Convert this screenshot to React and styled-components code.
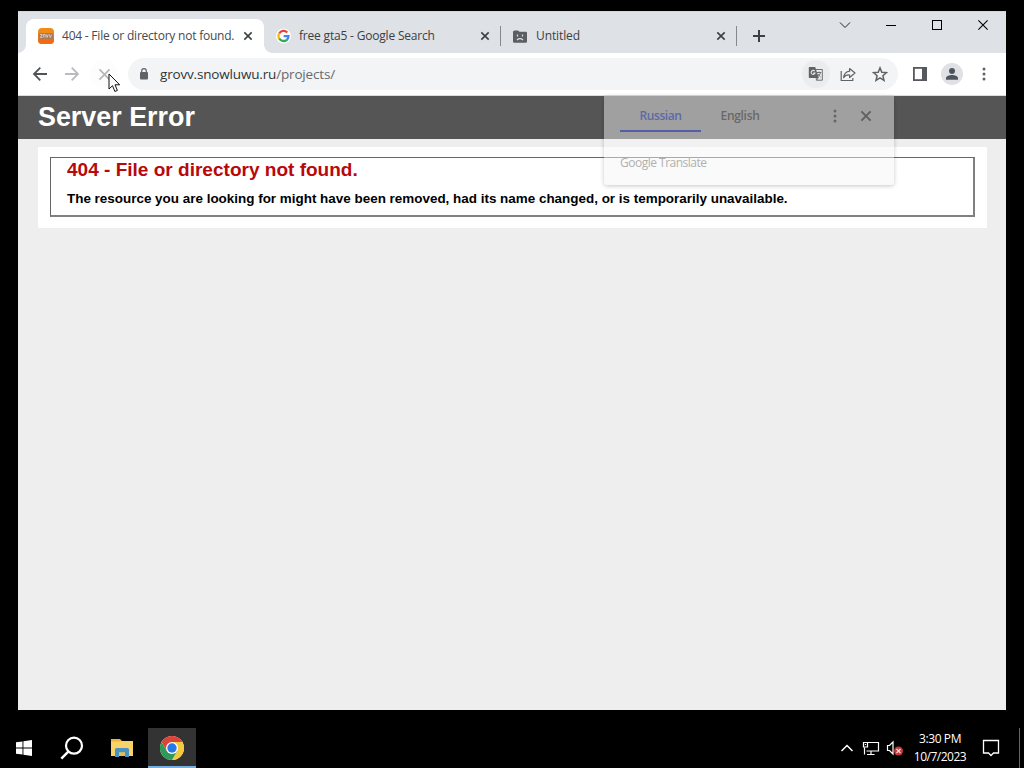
import React from "react";
import styled, { createGlobalStyle } from "styled-components";

const Global = createGlobalStyle`
  * { box-sizing: border-box; }
  body { margin: 0; background: #000; overflow: hidden; }
  svg { display: block; flex: none; }
`;

const ui = `"Open Sans", "Noto Sans", sans-serif`;

const Desktop = styled.div`
  position: relative;
  width: 1024px;
  height: 768px;
  background: #000;
  display: flex;
  flex-direction: column;
  justify-content: space-between;
  padding-top: 11px;
  font-family: ${ui};
`;

const BrowserWindow = styled.section`
  position: relative;
  width: 988px;
  height: 699px;
  margin-left: 18px;
  background: #eee;
  display: flex;
  flex-direction: column;
`;

const TabStrip = styled.div`
  height: 42px;
  flex: none;
  display: flex;
  align-items: flex-end;
  padding-left: 8px;
  background: #dee1e6;
  border-top: 1px solid #d3d5da;
`;

const Tab = styled.div`
  position: relative;
  width: ${(p) => p.$w}px;
  height: 34px;
  display: flex;
  align-items: center;
  padding: 0 ${(p) => (p.$active ? 9 : 8)}px 0 12px;
  border-radius: 8px 8px 0 0;
  background: ${(p) => (p.$active ? "#fff" : "transparent")};
  color: ${(p) => (p.$active ? "#45494d" : "#3c4043")};
  &::before, &::after {
    content: "";
    display: ${(p) => (p.$active ? "block" : "none")};
    position: absolute;
    bottom: 0;
    width: 8px;
    height: 8px;
  }
  &::before { left: -8px; background: radial-gradient(circle at 0 0, transparent 7.5px, #fff 8px); }
  &::after { right: -8px; background: radial-gradient(circle at 100% 0, transparent 7.5px, #fff 8px); }
`;

const TabTitle = styled.span`
  flex: 1;
  margin-left: ${(p) => p.$gap || 8}px;
  font-size: 12px;
  line-height: 16px;
  letter-spacing: ${(p) => p.$ls || 0}px;
  white-space: nowrap;
`;

const Separator = styled.i`
  width: 1px;
  height: 20px;
  margin-bottom: 7px;
  background: #85888d;
`;

const NewTab = styled.div`
  width: 44px;
  height: 34px;
  display: grid;
  place-items: center;
`;

const Controls = styled.div`
  align-self: flex-start;
  margin-left: auto;
  display: flex;
`;

const ControlButton = styled.div`
  width: 46px;
  height: 26px;
  display: grid;
  place-items: center;
`;

const Toolbar = styled.div`
  height: 43px;
  flex: none;
  display: flex;
  align-items: center;
  padding: 0 6px;
  background: #fff;
  border-bottom: 1px solid #dcdddf;
`;

const ToolButton = styled.div`
  width: 32px;
  height: 32px;
  display: grid;
  place-items: center;
`;

const Disc = styled.div`
  width: ${(p) => p.$size || 28}px;
  height: ${(p) => p.$size || 28}px;
  border-radius: 50%;
  background: ${(p) => p.$bg};
  display: grid;
  place-items: center;
`;

const Omnibox = styled.div`
  width: 770px;
  height: 32px;
  margin: 0 6px 0 8px;
  padding: 0 2px 0 11px;
  border-radius: 16px;
  background: #f3f4f5;
  display: flex;
  align-items: center;
`;

const Url = styled.span`
  flex: 1;
  margin-left: 11px;
  font-size: 13.5px;
  line-height: 20px;
  letter-spacing: -0.17px;
  color: #303438;
  span { color: #666a6e; }
`;

const PageHeader = styled.header`
  height: 43px;
  flex: none;
  padding: 6px 20px;
  background: #555;
  h1 {
    margin: 0;
    font: bold 26.88px/31px "Liberation Sans", sans-serif;
    color: #fff;
  }
`;

const Card = styled.main`
  margin: 8px 19px 0 20px;
  height: 81px;
  background: #fff;
  padding: 10px 12px 11px 12px;
  font-family: "Liberation Sans", sans-serif;
`;

const Fieldset = styled.div`
  height: 60px;
  border: 1px solid #666;
  border-right-width: 2px;
  border-bottom-width: 2px;
  border-right-color: #808080;
  border-bottom-color: #808080;
  padding: 0 16px;
  h2 {
    margin: 0;
    font-size: 19.04px;
    line-height: 23px;
    color: #b8080c;
  }
  h3 {
    margin: 10px 0 0;
    font-size: 13.44px;
    line-height: 16px;
    color: #000;
    white-space: nowrap;
  }
`;

const TranslateBubble = styled.aside`
  position: absolute;
  left: 586px;
  top: 85px;
  width: 290px;
  height: 89px;
  padding: 0 16px;
  background: rgba(244, 244, 244, 0.47);
  border-radius: 0 0 3px 3px;
  box-shadow: 0 1px 4px rgba(0, 0, 0, 0.22);
`;

const BubbleRow = styled.div`
  display: flex;
  align-items: center;
  height: 36px;
  padding-top: 4px;
`;

const Language = styled.div`
  width: ${(p) => p.$w}px;
  height: 32px;
  padding-top: 7px;
  text-align: center;
  font-size: 12px;
  font-weight: 600;
  line-height: 17px;
  letter-spacing: ${(p) => p.$ls}px;
  color: ${(p) => (p.$active ? "#5b69a8" : "#686868")};
  border-bottom: 2px solid ${(p) => (p.$active ? "#5360a8" : "transparent")};
`;

const BubbleIcons = styled.div`
  margin-left: auto;
  padding-right: 7px;
  display: flex;
  align-items: center;
  gap: 24px;
`;

const BubbleBrand = styled.div`
  margin-top: 22px;
  font-size: 12px;
  line-height: 18px;
  letter-spacing: -0.5px;
  color: #b0b0b0;
`;

const Pointer = styled.svg`
  position: absolute;
  left: 108px;
  top: 73px;
`;

const Taskbar = styled.footer`
  height: 40px;
  display: flex;
  align-items: center;
  background: #000;
`;

const TaskButton = styled.div`
  width: ${(p) => p.$w || 48}px;
  height: 40px;
  display: grid;
  place-items: center;
  background: ${(p) => (p.$active ? "#333" : "transparent")};
  box-shadow: ${(p) => (p.$active ? "inset 0 -2px #76aee0" : "none")};
`;

const Tray = styled.div`
  margin-left: auto;
  display: flex;
  align-items: center;
  height: 40px;
`;

const Clock = styled.div`
  width: 72px;
  text-align: center;
  font-size: 12px;
  line-height: 18px;
  letter-spacing: -0.4px;
  color: #fff;
  div + div { letter-spacing: -0.5px; }
`;

const DesktopEdge = styled.i`
  width: 1px;
  height: 40px;
  margin: 0 4px 0 13px;
  background: #666;
`;

const Cross = ({ size = 8, color = "#3c4043", w = 1.6 }) => (
  <svg width={size} height={size} viewBox="0 0 10 10" stroke={color} strokeWidth={(w * 10) / size} overflow="visible">
    <path d="M0.4 0.4L9.6 9.6M9.6 0.4L0.4 9.6" />
  </svg>
);

const CloseSlot = styled.div`
  width: 15px;
  height: 16px;
  display: grid;
  place-items: center;
`;

const SiteIcon = () => (
  <svg width="16" height="16" viewBox="0 0 16 16">
    <rect width="16" height="16" rx="4" fill="#f28a18" />
    <path d="M0 10h16v2a4 4 0 0 1-4 4H4a4 4 0 0 1-4-4z" fill="#ef6c14" />
    <rect x="0.5" y="5" width="15" height="6" rx="2" fill="#a9795c" />
    <path d="M2 6.5h2.2L2.3 9.5h2M5.3 9.5v-3h1.8v3M8.2 6.5l1 3 1-3M11.3 6.5l1 3 1.2-3" stroke="#d8c8bc" fill="none" />
  </svg>
);

const GoogleIcon = () => (
  <svg width="15" height="16" viewBox="0 0 15 16">
    <circle cx="7.5" cy="8" r="7.5" fill="#fff" />
    <g fill="none" strokeWidth="2.3">
      <path d="M11.2 4.5A5 5 0 0 0 3.2 5.5" stroke="#ea4335" />
      <path d="M3.2 5.4A5 5 0 0 0 3.2 10.6" stroke="#fbbc05" />
      <path d="M3.2 10.5A5 5 0 0 0 10.8 11.8" stroke="#34a853" />
      <path d="M10.6 12A5 5 0 0 0 12.5 8.2H7.6" stroke="#4285f4" />
    </g>
  </svg>
);

const SadFolder = () => (
  <svg width="14" height="13" viewBox="0 0 14 13">
    <path d="M1.5 0.5H5l1.5 1.2h6A1.3 1.3 0 0 1 14 3v8.5a1.3 1.3 0 0 1-1.4 1.3H1.4A1.3 1.3 0 0 1 0 11.5V2A1.5 1.5 0 0 1 1.5.5z" fill="#5b5f64" />
    <path d="M4.500 4.500v2M9.500 4.500v2M4 10q3-2.600 6 0" stroke="#dee1e6" strokeWidth="1.200" fill="none" />
  </svg>
);

const Arrow = ({ color, flip }) => (
  <svg width="16" height="16" viewBox="0 0 16 16" fill="none" stroke={color} strokeWidth="1.8" transform={flip ? "scale(-1 1)" : undefined}>
    <path d="M15 8H2M8.300 1.700L2 8l6.300 6.300" />
  </svg>
);

const Lock = () => (
  <svg width="10" height="12" viewBox="0 0 10 12">
    <rect x="1" y="4" width="8" height="7.500" rx="1" fill="#5f6368" />
    <path d="M2.700 4.500V3a2.300 2.300 0 0 1 4.600 0v1.500" fill="none" stroke="#5f6368" strokeWidth="1.200" />
  </svg>
);

const TranslateIcon = () => (
  <svg width="16" height="16" viewBox="0 0 16 16">
    <path d="M6 3.500h8.300v10.700H8.500" fill="#eceded" stroke="#6d7074" />
    <path d="M1.500 1h5.700l3.600 11H1.500A.8.800 0 0 1 .8 11.200V1.800A.8.800 0 0 1 1.500 1z" fill="#5f6368" />
    <path d="M6.700 5.200A2 2 0 1 0 7 7.100H5.200" stroke="#e6e7e8" fill="none" strokeWidth="1.100" />
    <path d="M9 6.500h4.300M11 5.500v1M12.500 6.500q-.8 2.800-2.400 4M10 8q1.200 2 2.700 3M8.200 12l.3 2.200 1.700-2.200" stroke="#6d7074" fill="none" strokeWidth="1" />
  </svg>
);

const ShareIcon = () => (
  <svg width="16" height="15" viewBox="0 0 16 15" fill="none" stroke="#5f6368" strokeWidth="1.200">
    <path d="M1.200 4v9.500h11.600V11" />
    <path d="M9.600 1.500L15 6 9.600 10.500V8Q5.600 7.600 3.600 10.700 4.300 4.900 9.600 4.200z" strokeLinejoin="round" />
  </svg>
);

const Star = () => (
  <svg width="16" height="16" viewBox="0 0 16 16" fill="none" stroke="#5f6368" strokeWidth="1.500">
    <path d="M8 1.900l1.800 4.300 4.700.4-3.600 3.100 1.100 4.600L8 11.800l-4 2.500 1.100-4.600L1.500 6.600l4.700-.4z" />
  </svg>
);

const SidePanel = () => (
  <svg width="14" height="14" viewBox="0 0 14 14">
    <rect x="0.900" y="0.900" width="12.200" height="12.200" fill="none" stroke="#55595e" strokeWidth="1.800" />
    <rect x="9" y="1" width="4" height="12" fill="#55595e" />
  </svg>
);

const Person = () => (
  <svg width="14" height="14" viewBox="0 0 14 14" fill="#50555d">
    <circle cx="7" cy="4" r="3" />
    <path d="M1 12.800v-1.600c0-2.200 3.500-3.200 6-3.200s6 1 6 3.200v1.600z" />
  </svg>
);

const Dots = ({ color = "#5f6368" }) => (
  <svg width="4" height="14" viewBox="0 0 4 14" fill={color}>
    <circle cx="2" cy="2" r="1.500" />
    <circle cx="2" cy="7" r="1.500" />
    <circle cx="2" cy="12" r="1.500" />
  </svg>
);

const WindowsLogo = () => (
  <svg width="16" height="16" viewBox="0 0 16 16" fill="#fff">
    <path d="M0 2.300l6.500-.9v6.100H0zM7.400 1.200L16 0v7.500H7.400zM0 8.400h6.500v6.200L0 13.700zM7.400 8.400H16V16l-8.600-1.200z" />
  </svg>
);

const SearchIcon = () => (
  <svg width="24" height="24" viewBox="0 0 24 24" fill="none" stroke="#fff" strokeWidth="2.200">
    <circle cx="14" cy="9.700" r="8" />
    <path d="M8.300 15.600L1.300 22.600" strokeWidth="2.500" />
  </svg>
);

const FolderIcon = () => (
  <svg width="22" height="20" viewBox="0 0 22 20">
    <path d="M0 1h9l2 2h10.500v15H0z" fill="#e9b440" />
    <path d="M0 3.500h9L11 3h11v15H0z" fill="#f8d36a" />
    <path d="M4 11.500a1.500 1.500 0 0 1 1.500-1.500h11A1.500 1.500 0 0 1 18 11.500V19h-4v-4.500H8V19H4z" fill="#4a92bf" />
    <path d="M8 14.500h6V18H8z" fill="#e2bd58" />
  </svg>
);

const ChromeIcon = () => (
  <svg width="24" height="24" viewBox="0 0 24 24">
    <circle cx="12" cy="12" r="12" fill="#fff" />
    <path d="M12 12L1.600 6A12 12 0 0 1 22.400 6z" fill="#dd4438" />
    <path d="M12 6H22.400A12 12 0 0 1 12 24L17.200 15z" fill="#f5c93c" />
    <path d="M6.800 15L1.600 6A12 12 0 0 0 12 24l5.200-9z" fill="#2f9a57" />
    <path d="M1.600 6l5.200 9L12 6z" fill="#dd4438" />
    <circle cx="12" cy="12" r="6" fill="#fff" />
    <circle cx="12" cy="12" r="4.700" fill="#2878e6" />
  </svg>
);

const TrayIcons = () => (
  <svg width="64" height="20" viewBox="0 0 64 20" fill="none" stroke="#fff" strokeWidth="1.200">
    <path d="M1.500 13l5.500-5.500 5.500 5.500" strokeWidth="1.500" />
    <path d="M28 4.500h10.500v8.500H26.500M24.500 9.500v7M27 16.500h7.500M31 13v3.500" />
    <path d="M23.500 4.500h4v4.500h-4zM25.500 6v1" />
    <path d="M47.500 7.500h2l3.500-3.500v12l-3.500-3.500h-2z" />
    <circle cx="58.500" cy="13" r="4.500" fill="#c93639" stroke="none" />
    <path d="M56.500 11l4 4M60.500 11l-4 4" stroke="#fbdcdc" />
  </svg>
);

const NoticeIcon = () => (
  <svg width="18" height="18" viewBox="0 0 18 18" fill="none" stroke="#fff" strokeWidth="1.300">
    <path d="M1.500 1.500h15v12.500H11.500L9 16.500 6.500 14H1.500z" />
  </svg>
);

const tabs = [
  { title: "404 - File or directory not found.", w: 238, icon: <SiteIcon />, active: true, ls: -0.22 },
  { title: "free gta5 - Google Search", w: 236, icon: <GoogleIcon />, ls: -0.19 },
  { title: "Untitled", w: 235, icon: <SadFolder />, ls: -0.1, gap: 9 },
];

export default function App() {
  return (
    <Desktop>
      <Global />
      <BrowserWindow>
        <TabStrip>
          {tabs.map((t, i) => (
            <React.Fragment key={t.title}>
              <Tab $w={t.w} $active={t.active}>
                {t.icon}
                <TabTitle $ls={t.ls} $gap={t.gap}>{t.title}</TabTitle>
                <CloseSlot><Cross size={8} /></CloseSlot>
              </Tab>
              {i > 0 && <Separator />}
            </React.Fragment>
          ))}
          <NewTab>
            <svg width="12" height="12" viewBox="0 0 12 12" stroke="#3c4043" strokeWidth="2"><path d="M6 0v12M0 6h12" /></svg>
          </NewTab>
          <Controls>
            <ControlButton><svg width="12" height="8" viewBox="0 0 12 8" fill="none" stroke="#222"><path d="M1 1.500l5 5 5-5" /></svg></ControlButton>
            <ControlButton><svg width="10" height="10" viewBox="0 0 10 10" stroke="#000"><path d="M0 5.500h10" /></svg></ControlButton>
            <ControlButton><svg width="10" height="10" viewBox="0 0 10 10" fill="none" stroke="#000"><rect x=".5" y=".5" width="9" height="9" /></svg></ControlButton>
            <ControlButton><Cross size={10} color="#000" w={1.1} /></ControlButton>
          </Controls>
        </TabStrip>
        <Toolbar>
          <ToolButton><Arrow color="#505459" /></ToolButton>
          <ToolButton><Arrow color="#b9bbbe" flip /></ToolButton>
          <ToolButton><Disc $bg="#fdfdfd"><Cross size={11} color="#b4b6b9" w={1.7} /></Disc></ToolButton>
          <Omnibox>
            <Lock />
            <Url>grovv.snowluwu.ru<span>/projects/</span></Url>
            <ToolButton><Disc $bg="#ebeced"><TranslateIcon /></Disc></ToolButton>
            <ToolButton><ShareIcon /></ToolButton>
            <ToolButton><Star /></ToolButton>
          </Omnibox>
          <ToolButton><SidePanel /></ToolButton>
          <ToolButton><Disc $bg="#dfe1e5" $size={22}><Person /></Disc></ToolButton>
          <ToolButton><Dots /></ToolButton>
        </Toolbar>
        <PageHeader><h1>Server Error</h1></PageHeader>
        <Card>
          <Fieldset>
            <h2>404 - File or directory not found.</h2>
            <h3>The resource you are looking for might have been removed, had its name changed, or is temporarily unavailable.</h3>
          </Fieldset>
        </Card>
        <TranslateBubble>
          <BubbleRow>
            <Language $w={81} $active $ls={-0.45}>Russian</Language>
            <Language $w={78} $ls={-0.3}>English</Language>
            <BubbleIcons>
              <Dots color="#666" />
              <Cross size={10} color="#606060" w={2} />
            </BubbleIcons>
          </BubbleRow>
          <BubbleBrand>Google Translate</BubbleBrand>
        </TranslateBubble>
      </BrowserWindow>
      <Taskbar>
        <TaskButton><WindowsLogo /></TaskButton>
        <TaskButton><SearchIcon /></TaskButton>
        <TaskButton $w={52}><FolderIcon /></TaskButton>
        <TaskButton $active><ChromeIcon /></TaskButton>
        <Tray>
          <TrayIcons />
          <Clock>
            <div>3:30 PM</div>
            <div>10/7/2023</div>
          </Clock>
          <TaskButton $w={30}><NoticeIcon /></TaskButton>
          <DesktopEdge />
        </Tray>
      </Taskbar>
      <Pointer width="13" height="20" viewBox="0 0 13 20">
        <path d="M1 1v15l3.500-3.300 2.400 5.800 2.500-1.100L7 11.800h4.700z" fill="#fff" stroke="#111" />
      </Pointer>
    </Desktop>
  );
}
